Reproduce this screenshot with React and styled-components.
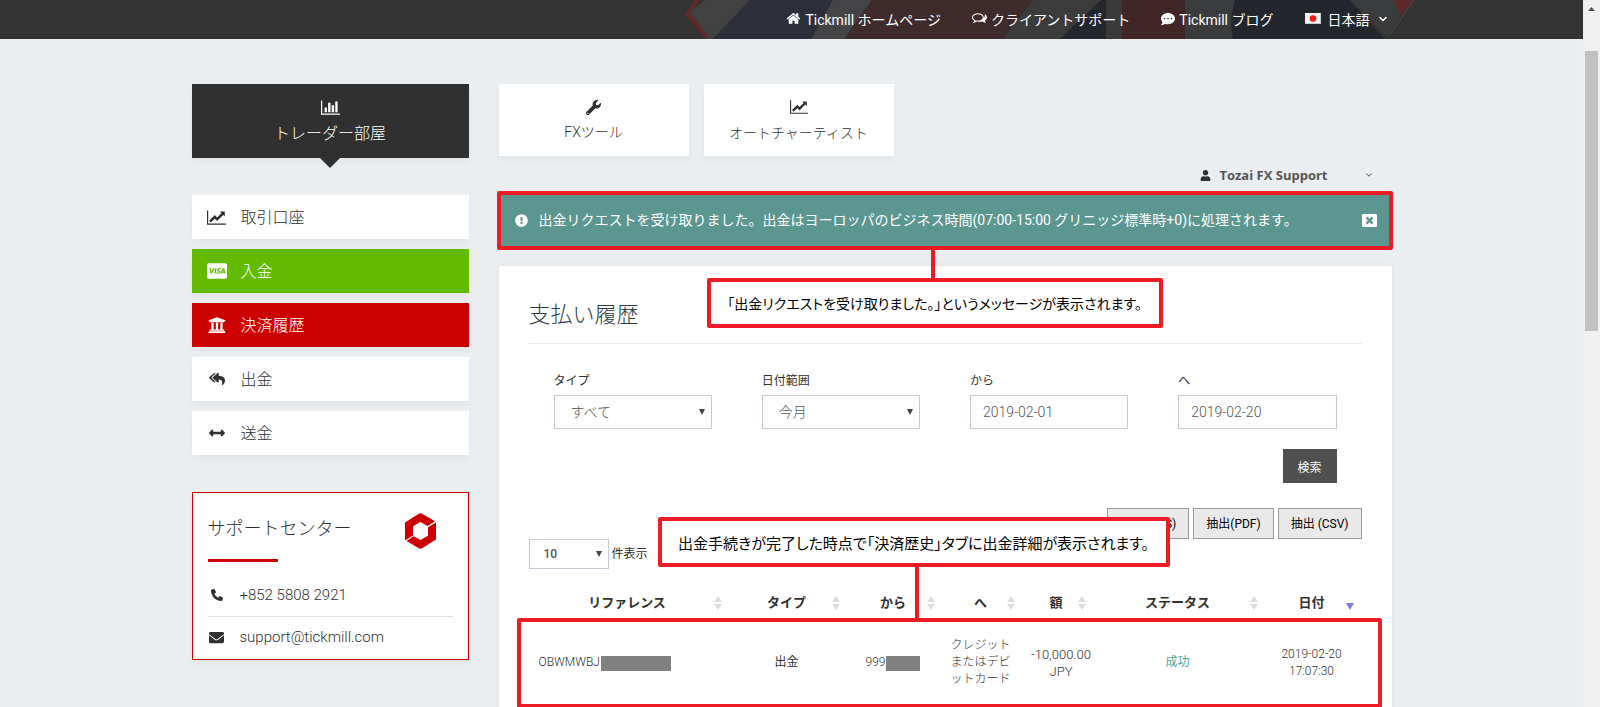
import React from 'react';
import styled, { createGlobalStyle, css } from 'styled-components';
import {
  FaArrowsAltH,
  FaCcVisa,
  FaCommentDots,
  FaEnvelope,
  FaExclamationCircle,
  FaReplyAll,
  FaUniversity,
  FaUser,
  FaWindowClose,
  FaWrench,
} from 'react-icons/fa';
import { FaPhone } from 'react-icons/fa6';
import { FiChevronDown } from 'react-icons/fi';

const GlobalStyle = createGlobalStyle`
  * {
    box-sizing: border-box;
  }

  body {
    margin: 0;
    background-color: #eaeef1;
    color: #303030;
    font-family: Roboto, 'Noto Sans CJK JP', sans-serif;
    font-size: 14px;
    font-weight: 300;
    overflow: hidden;
  }

  h2, h3, p, ul {
    margin: 0;
    padding: 0;
    font-weight: 300;
  }

  ul {
    list-style: none;
  }

  a {
    color: inherit;
    text-decoration: none;
  }

  button, input, select {
    font-family: inherit;
    font-size: inherit;
    font-weight: inherit;
    margin: 0;
  }
`;

const Shell = styled.div`
  display: flex;
  height: 100vh;
`;

const Page = styled.div`
  flex: 1;
  min-width: 0;
  overflow: hidden;
`;

const ScrollTrack = styled.div`
  flex: 0 0 17px;
  display: flex;
  flex-direction: column;
  align-items: center;
  padding-top: 7px;
  background-color: #f0f0f0;

  svg {
    width: 7px;
    height: 4px;
    fill: #505050;
  }
`;

const ScrollThumb = styled.div`
  width: 13px;
  height: 40%;
  margin-top: 40px;
  background-color: #c1c1c1;
`;

/* Top bar */
const TopBar = styled.header`
  position: relative;
  height: 39px;
  background-color: #333;
  overflow: hidden;
`;

const Flag = styled.svg`
  position: absolute;
  top: 0;
  left: 0;
  width: 1583px;
  height: 39px;
`;

const Container = styled.div`
  max-width: 1200px;
  margin: 0 auto;
`;

const TopNav = styled.nav`
  position: relative;
  display: flex;
  align-items: center;
  justify-content: flex-end;
  gap: 31px;
  height: 37px;
  padding-right: 3px;
  color: #fff;
  font-weight: 400;

  a {
    display: flex;
    align-items: center;
    gap: 4px;
  }
`;

const Language = styled.button`
  display: flex;
  align-items: center;
  gap: 7px;
  padding: 0;
  border: none;
  background: none;
  color: #fff;
`;

/* Layout */
const Columns = styled(Container)`
  display: grid;
  grid-template-columns: 277px minmax(0, 1fr);
  align-items: start;
  gap: 30px;
  padding-top: 45px;
`;

const shadow = css`
  box-shadow: 0 4px 6px rgba(0, 0, 0, 0.04);
`;

/* CJK glyphs sit low in a Roboto line box */
const Label = styled.span`
  padding-bottom: 3px;
`;

const RoomTab = styled.a`
  position: relative;
  display: flex;
  flex-direction: column;
  align-items: center;
  justify-content: center;
  gap: 7px;
  height: 74px;
  background-color: #303030;
  color: #fff;
  font-size: 16px;
  line-height: 20px;
  ${shadow}

  &::after {
    content: '';
    position: absolute;
    top: 100%;
    border: 10px solid transparent;
    border-top-color: #303030;
    border-bottom: none;
  }
`;

const Menu = styled.ul`
  display: flex;
  flex-direction: column;
  gap: 10px;
  margin-top: 37px;
`;

const MenuLink = styled.a`
  display: grid;
  grid-template-columns: 20px 1fr;
  align-items: center;
  gap: 14px;
  height: 44px;
  padding-left: 15px;
  background-color: ${(props) => props.$bg || '#fff'};
  color: ${(props) => (props.$bg ? '#fff' : '#303030')};
  font-size: 16px;
  ${shadow}

  svg {
    justify-self: center;
  }
`;

const SupportCard = styled.section`
  height: 168px;
  margin-top: 37px;
  padding: 15px;
  border: 1px solid #c00;
  background-color: #fff;
  ${shadow}
`;

const SupportHead = styled.div`
  display: flex;
  align-items: center;
  justify-content: space-between;
  height: 45px;
  padding-right: 17px;

  h3 {
    display: flex;
    font-size: 18px;
    line-height: 24px;
  }
`;

const RedBar = styled.div`
  width: 70px;
  height: 3px;
  margin: 6px 0 11px;
  background-color: #c00;
`;

const Contact = styled.a`
  display: grid;
  grid-template-columns: 18px 1fr;
  align-items: center;
  gap: 14px;
  height: 43px;
  font-size: 15px;

  & + & {
    height: 41px;
    border-top: 1px solid #ddd;
  }

  svg {
    justify-self: center;
  }
`;

const Tabs = styled.div`
  display: flex;
  gap: 15px;
`;

const Tab = styled.a`
  display: flex;
  flex-direction: column;
  align-items: center;
  justify-content: center;
  gap: 8px;
  width: 190px;
  height: 72px;
  background-color: #fff;
  line-height: 18px;
  ${shadow}
`;

const UserButton = styled.button`
  display: flex;
  align-items: center;
  height: 35px;
  margin-left: auto;
  padding: 3px 18px 0 0;
  border: none;
  background: none;
  color: #303030;

  span {
    margin: 0 36px 0 8px;
    color: #555;
    font-family: 'Open Sans', sans-serif;
    font-size: 13px;
    font-weight: 700;
  }
`;

/* Annotations drawn over the page */
const RED = '#ed1c24';

const Alert = styled.div`
  position: relative;
  display: flex;
  align-items: center;
  gap: 11px;
  height: 59px;
  margin: 0 -1px 0 -2px;
  padding: 0 12px 0 14px;
  border: 4px solid ${RED};
  border-radius: 2px;
  background-color: #5c9690;
  color: #fff;
  font-weight: 400;

  p {
    flex: 1;
    padding-bottom: 3px;
    font-weight: 400;
  }
`;

const CloseButton = styled.button`
  display: flex;
  padding: 0;
  border: none;
  background: none;
  color: #fff;
`;

const Callout = styled.div`
  position: absolute;
  z-index: 2;
  display: flex;
  align-items: center;
  justify-content: center;
  height: 50px;
  border: 4px solid ${RED};
  border-radius: 2px;
  background-color: #fff;
  color: #000;
  font-family: 'Noto Sans CJK JP', sans-serif;
  font-weight: 400;
  font-feature-settings: 'palt';
  white-space: nowrap;

  &::before {
    content: '';
    position: absolute;
    left: ${(props) => props.$stem}px;
    width: 4px;
    background-color: ${RED};
  }
`;

const AlertCallout = styled(Callout)`
  top: 83px;
  left: 206px;
  width: 456px;
  font-size: 14px;

  &::before {
    bottom: 100%;
    height: 32px;
  }
`;

const RowCallout = styled(Callout)`
  bottom: calc(100% + 55px);
  left: 137px;
  width: 512px;
  font-size: 15px;

  &::before {
    top: 100%;
    height: 55px;
  }
`;

const RowMark = styled.div`
  position: absolute;
  top: 35px;
  right: -20px;
  bottom: -4px;
  left: -12px;
  border: 4px solid ${RED};
  border-radius: 2px;
`;

/* Payment history */
const Panel = styled.main`
  margin-top: 16px;
  padding: 30px;
  background-color: #fff;
  box-shadow: 0 0 6px rgba(0, 0, 0, 0.06);

  h2 {
    padding: 2px 0 11px;
    border-bottom: 1px solid #eaeaea;
    color: #2b3b45;
    font-size: 22px;
    line-height: 34px;
  }
`;

const Filters = styled.form`
  display: grid;
  grid-template-columns: repeat(4, minmax(0, 1fr));
  column-gap: 50px;
  row-gap: 20px;
  padding: 28px 25px 25px;
`;

const Field = styled.div`
  display: flex;
  flex-direction: column;
  gap: 4px;

  label {
    font-size: 12px;
    font-weight: 400;
    line-height: 19px;
  }
`;

const control = css`
  width: 100%;
  height: 34px;
  border: 1px solid #c2cad8;
  border-radius: 0;
  background-color: #fff;
  color: #555;
`;

const TextInput = styled.input`
  ${control}
  padding: 0 12px;
`;

const SelectBox = styled.div`
  position: relative;
  width: ${(props) => (props.$small ? '80px' : '100%')};

  &::after {
    content: '';
    position: absolute;
    top: calc(50% - 3px);
    right: 7px;
    border: 3px solid transparent;
    border-top: 6px solid #444;
    border-bottom: none;
    pointer-events: none;
  }

  select {
    appearance: none;
    ${control}
    padding: 0 ${(props) => (props.$small ? 14 : 16)}px;
    font-size: ${(props) => (props.$small ? 12 : 14)}px;
    font-weight: ${(props) => (props.$small ? 500 : 300)};
    height: ${(props) => (props.$small ? 30 : 34)}px;
  }
`;

const SearchButton = styled.button`
  grid-column: 4;
  justify-self: end;
  width: 54px;
  height: 34px;
  padding: 0;
  border: none;
  background-color: #4f4f4f;
  color: #fff;
  font-size: 12px;
  font-weight: 400;
`;

const Exports = styled.div`
  display: flex;
  justify-content: flex-end;
  gap: 4px;

  button {
    height: 31px;
    padding: 0 12px 2px;
    border: 1px solid #999;
    background-color: #e9e9e9;
    color: #000;
    font-size: 12px;
    font-weight: 400;
  }
`;

const PageLength = styled.label`
  display: flex;
  align-items: center;
  gap: 3px;
  font-size: 12px;
  font-weight: 400;
`;

const TableArea = styled.div`
  position: relative;
  margin-top: 14px;
`;

const Table = styled.table`
  width: 100%;
  table-layout: fixed;
  border-collapse: collapse;
  text-align: center;

  th {
    height: 38px;
    padding: 0 6px 0 2px;
    border-bottom: 1px solid #ddd;
    font-size: 13px;
    font-weight: 700;
  }

  td {
    height: 83px;
    padding: 0 8px 0 4px;
    font-size: 12px;
    line-height: 17px;
  }
`;

const HeadCell = styled.div`
  position: relative;

  svg {
    position: absolute;
    top: 4px;
    right: 2px;
    width: 8px;
    height: 14px;
    fill: #dcdcdc;
  }

  .sorted {
    fill: #7c7ce0;
  }
`;

const RefCell = styled.td`
  text-align: left;

  && {
    padding-left: 10px;
  }
`;

const WordCell = styled.td`
  font-weight: 400;
`;

const AmountCell = styled.td`
  && {
    padding: 0 0 0 6px;
    font-size: 13px;
  }
`;

const StatusCell = styled(WordCell)`
  color: #4fa396;
`;

const Masked = styled.span`
  display: inline-block;
  width: ${(props) => props.$w}px;
  height: 15px;
  margin-left: 1px;
  background-color: #808080;
  vertical-align: middle;
`;

const BarChart = ({ size }) => (
  <svg width={size} height={size} viewBox="0 0 2048 1792" fill="currentColor" aria-hidden="true">
    <path d="M640 896v512h-256v-512h256zM1024 384v1024h-256v-1024h256zM2048 1536v128h-2048v-1536h128v1408h1920zM1408 640v768h-256v-768h256zM1792 256v1152h-256v-1152h256z" />
  </svg>
);

const LineChart = ({ size }) => (
  <svg width={size} height={size} viewBox="0 0 2048 1792" fill="currentColor" aria-hidden="true">
    <path d="M2048 1536v128h-2048v-1536h128v1408h1920zM1920 288v435q0 21-19.5 29.5t-35.5-7.5l-121-121-633 633q-10 10-23 10t-23-10l-233-233-416 416-192-192 585-585q10-10 23-10t23 10l233 233 464-464-121-121q-16-16-7.5-35.5t29.5-19.5h435q14 0 23 9t9 23z" />
  </svg>
);

const HomeIcon = () => (
  <svg width="15" height="15" viewBox="0 0 1792 1792" fill="currentColor" aria-hidden="true">
    <path d="M1472 992v480q0 26-19 45t-45 19h-384v-384h-256v384h-384q-26 0-45-19t-19-45v-480q0-1 .5-3t.5-3l575-474 575 474q1 2 1 6zM1695 923l-62 74q-8 9-21 11h-3q-13 0-21-7l-692-577-692 577q-12 8-24 7-13-2-21-11l-62-74q-8-10-7-23.5t11-21.5l719-599q32-26 76-26t76 26l244 204v-195q0-14 9-23t23-9h192q14 0 23 9t9 23v408l219 182q10 8 11 21.5t-7 23.5z" />
  </svg>
);

const CommentsIcon = () => (
  <svg width="15" height="15" viewBox="0 0 1792 1792" fill="currentColor" aria-hidden="true">
    <path d="M704 384q-153 0-286 52t-211.500 141-78.500 191q0 82 53 158t149 132l97 56-35 84q34-20 62-39l44-31 53 10q78 14 153 14 153 0 286-52t211.500-141 78.500-191-78.500-191-211.500-141-286-52zM704 256q191 0 353.500 68.500t256.500 186.500 94 257-94 257-256.500 186.500-353.500 68.500q-86 0-176-16-124 88-278 128-36 9-86 16h-3q-11 0-20.500-8t-11.500-21q-1-3-1-6.500t.5-6.500 2-6l2.500-5 3.500-5.500 4-5 4.500-5 4-4.500q5-6 23-25t26-29.500 22.500-29 25-38.500 20.500-44q-124-72-195-177t-71-224q0-139 94-257t256.500-186.500 353.500-68.500zM1526 1169q10 24 20.500 44t25 38.500 22.500 29 26 29.500 23 25q1 1 4 4.500t4.500 5 4 5 3.500 5.500l2.500 5 2 6 .5 6.500-1 6.500q-3 14-13 22t-22 7q-50-7-86-16-154-40-278-128-90 16-176 16-271 0-472-132 58 4 88 4 161 0 309-45t264-129q125-92 192-212t67-254q0-77-23-152 129 71 204 178t75 230q0 120-71 224.500t-195 176.500z" />
  </svg>
);

const JapanFlag = () => (
  <svg width="16" height="11" viewBox="0 0 16 11" aria-hidden="true">
    <rect width="16" height="11" fill="#f4f4f4" />
    <path d="M0 10.500h16M15.500 0v11" stroke="#c9c9c9" />
    <circle cx="8" cy="5.500" r="3.300" fill="#ee1c1c" />
  </svg>
);

const Logo = () => (
  <svg width="31" height="36" viewBox="0 0 31 36" fill="#c00" aria-hidden="true">
    <path d="M0 9.500 13.500 1q2-1.300 4 0L30 8.300 22.500 13 15.500 9 8 13.200v9.300L0 27.500z" />
    <path d="M31 9.500V26.500L17.500 35q-2 1.300-4 0L1.500 27.900 8.700 23.300 15.500 27l7.500-4.200v-8.500z" />
  </svg>
);

const SortIcon = ({ sorted }) => (
  <svg className={sorted ? 'sorted' : undefined} viewBox="0 0 8 14" aria-hidden="true">
    {!sorted && <path d="M4 0l4 6H0z" />}
    {sorted ? <path d="M0 7h8l-4 7z" /> : <path d="M0 8h8l-4 6z" />}
  </svg>
);

const MENU = [
  { title: '取引口座', icon: <LineChart size={19} /> },
  { title: '入金', icon: <FaCcVisa size={20} />, bg: '#62bb00' },
  { title: '決済履歴', icon: <FaUniversity size={18} />, bg: '#c00' },
  { title: '出金', icon: <FaReplyAll size={16} /> },
  { title: '送金', icon: <FaArrowsAltH size={16} /> },
];

const COLUMNS = [
  { title: 'リファレンス', width: 201 },
  { title: 'タイプ', width: 118 },
  { title: 'から', width: 95 },
  { title: 'へ', width: 80 },
  { title: '額', width: 71 },
  { title: 'ステータス', width: 172 },
  { title: '日付', width: 96, sorted: true },
];

function TopBarBackground() {
  return (
    <Flag viewBox="0 0 1583 39" aria-hidden="true">
      <path d="M706 0h44l-37 39h-6l-19-26z" fill="#424242" />
      <path d="M694 0h6l-10 13 18 22-3 3-20-24z" fill="#5f2b2a" />
      <path d="M750 0h83l-22 39h-98z" fill="#2c2e3a" />
      <path d="M833 0h39l-28 39h-33z" fill="#444345" />
      <path d="M872 0h161l-30 39H844z" fill="#3f2b2b" />
      <path d="M1033 0h68l-41 39h-57z" fill="#3b3b3c" />
      <path d="M1101 0h5v39h-46z" fill="#23262e" />
      <path d="M1106 0h16v39h-16z" fill="#3a3a3b" />
      <path d="M1122 0h63v39h-63z" fill="#402626" />
      <path d="M1185 0h50q-6 18-2 39h-48z" fill="#3a3b3d" />
      <path d="M1235 0h115l34 39H1233q-4-21 2-39z" fill="#23262d" />
      <path d="M1350 0h43l8 14-14 23z" fill="#3a3b3c" />
      <path d="M1393 0h21l-13 15z" fill="#5b2b2b" />
      <path d="M1414 0l-25 36" stroke="#4b4b4b" fill="none" />
    </Flag>
  );
}

function SideBar() {
  return (
    <aside>
      <RoomTab href="#room">
        <BarChart size={19} />
        トレーダー部屋
      </RoomTab>
      <Menu>
        {MENU.map((item) => (
          <li key={item.title}>
            <MenuLink href="#menu" $bg={item.bg}>
              {item.icon}
              <Label>{item.title}</Label>
            </MenuLink>
          </li>
        ))}
      </Menu>
      <SupportCard>
        <SupportHead>
          <h3>
            <Label>サポートセンター</Label>
          </h3>
          <Logo />
        </SupportHead>
        <RedBar />
        <Contact href="tel:+85258082921">
          <FaPhone size={12} />
          +852 5808 2921
        </Contact>
        <Contact href="mailto:support@tickmill.com">
          <FaEnvelope size={15} />
          support@tickmill.com
        </Contact>
      </SupportCard>
    </aside>
  );
}

function History() {
  return (
    <Panel>
      <h2>支払い履歴</h2>
      <Filters>
        <Field>
          <label htmlFor="type">タイプ</label>
          <SelectBox>
            <select id="type">
              <option>すべて</option>
            </select>
          </SelectBox>
        </Field>
        <Field>
          <label htmlFor="range">日付範囲</label>
          <SelectBox>
            <select id="range">
              <option>今月</option>
            </select>
          </SelectBox>
        </Field>
        <Field>
          <label htmlFor="from">から</label>
          <TextInput id="from" defaultValue="2019-02-01" />
        </Field>
        <Field>
          <label htmlFor="to">へ</label>
          <TextInput id="to" defaultValue="2019-02-20" />
        </Field>
        <SearchButton type="button">検索</SearchButton>
      </Filters>
      <Exports>
        <button type="button">抽出 (XLS)</button>
        <button type="button">抽出(PDF)</button>
        <button type="button">抽出 (CSV)</button>
      </Exports>
      <PageLength>
        <SelectBox $small>
          <select>
            <option>10</option>
          </select>
        </SelectBox>
        <Label>件表示</Label>
      </PageLength>
      <TableArea>
        <Table>
          <colgroup>
            {COLUMNS.map((col) => (
              <col key={col.title} width={col.width} />
            ))}
          </colgroup>
          <thead>
            <tr>
              {COLUMNS.map((col) => (
                <th key={col.title}>
                  <HeadCell>
                    {col.title}
                    <SortIcon sorted={col.sorted} />
                  </HeadCell>
                </th>
              ))}
            </tr>
          </thead>
          <tbody>
            <tr>
              <RefCell>
                OBWMWBJ
                <Masked $w={70} />
              </RefCell>
              <WordCell>出金</WordCell>
              <td>
                999
                <Masked $w={34} />
              </td>
              <td>クレジットまたはデビットカード</td>
              <AmountCell>
                -10,000.00
                <br />
                JPY
              </AmountCell>
              <StatusCell>成功</StatusCell>
              <td>
                2019-02-20
                <br />
                17:07:30
              </td>
            </tr>
          </tbody>
        </Table>
        <RowMark>
          <RowCallout $stem={253}>出金手続きが完了した時点で「決済歴史」タブに出金詳細が表示されます。</RowCallout>
        </RowMark>
      </TableArea>
    </Panel>
  );
}

function App() {
  return (
    <>
      <GlobalStyle />
      <Shell>
        <Page>
          <TopBar>
            <TopBarBackground />
            <Container>
              <TopNav>
                <a href="#home">
                  <HomeIcon />
                  Tickmill ホームページ
                </a>
                <a href="#support">
                  <CommentsIcon />
                  クライアントサポート
                </a>
                <a href="#blog">
                  <FaCommentDots size={14} />
                  Tickmill ブログ
                </a>
                <Language type="button">
                  <JapanFlag />
                  日本語
                  <FiChevronDown size={12} strokeWidth={3} />
                </Language>
              </TopNav>
            </Container>
          </TopBar>
          <Columns>
            <SideBar />
            <div>
              <Tabs>
                <Tab href="#tools">
                  <FaWrench size={15} />
                  FXツール
                </Tab>
                <Tab href="#autochartist">
                  <LineChart size={18} />
                  オートチャーティスト
                </Tab>
              </Tabs>
              <UserButton type="button">
                <FaUser size={11} />
                <span>Tozai FX Support</span>
                <FiChevronDown size={10} />
              </UserButton>
              <Alert role="alert">
                <FaExclamationCircle size={13} />
                <p>出金リクエストを受け取りました。出金はヨーロッパのビジネス時間(07:00-15:00 グリニッジ標準時+0)に処理されます。</p>
                <CloseButton type="button" aria-label="閉じる">
                  <FaWindowClose size={15} />
                </CloseButton>
                <AlertCallout $stem={220}>「出金リクエストを受け取りました。」というメッセージが表示されます。</AlertCallout>
              </Alert>
              <History />
            </div>
          </Columns>
        </Page>
        <ScrollTrack>
          <svg viewBox="0 0 7 4" aria-hidden="true">
            <path d="M0 4h7L3.500 0z" />
          </svg>
          <ScrollThumb />
        </ScrollTrack>
      </Shell>
    </>
  );
}

export default App;
